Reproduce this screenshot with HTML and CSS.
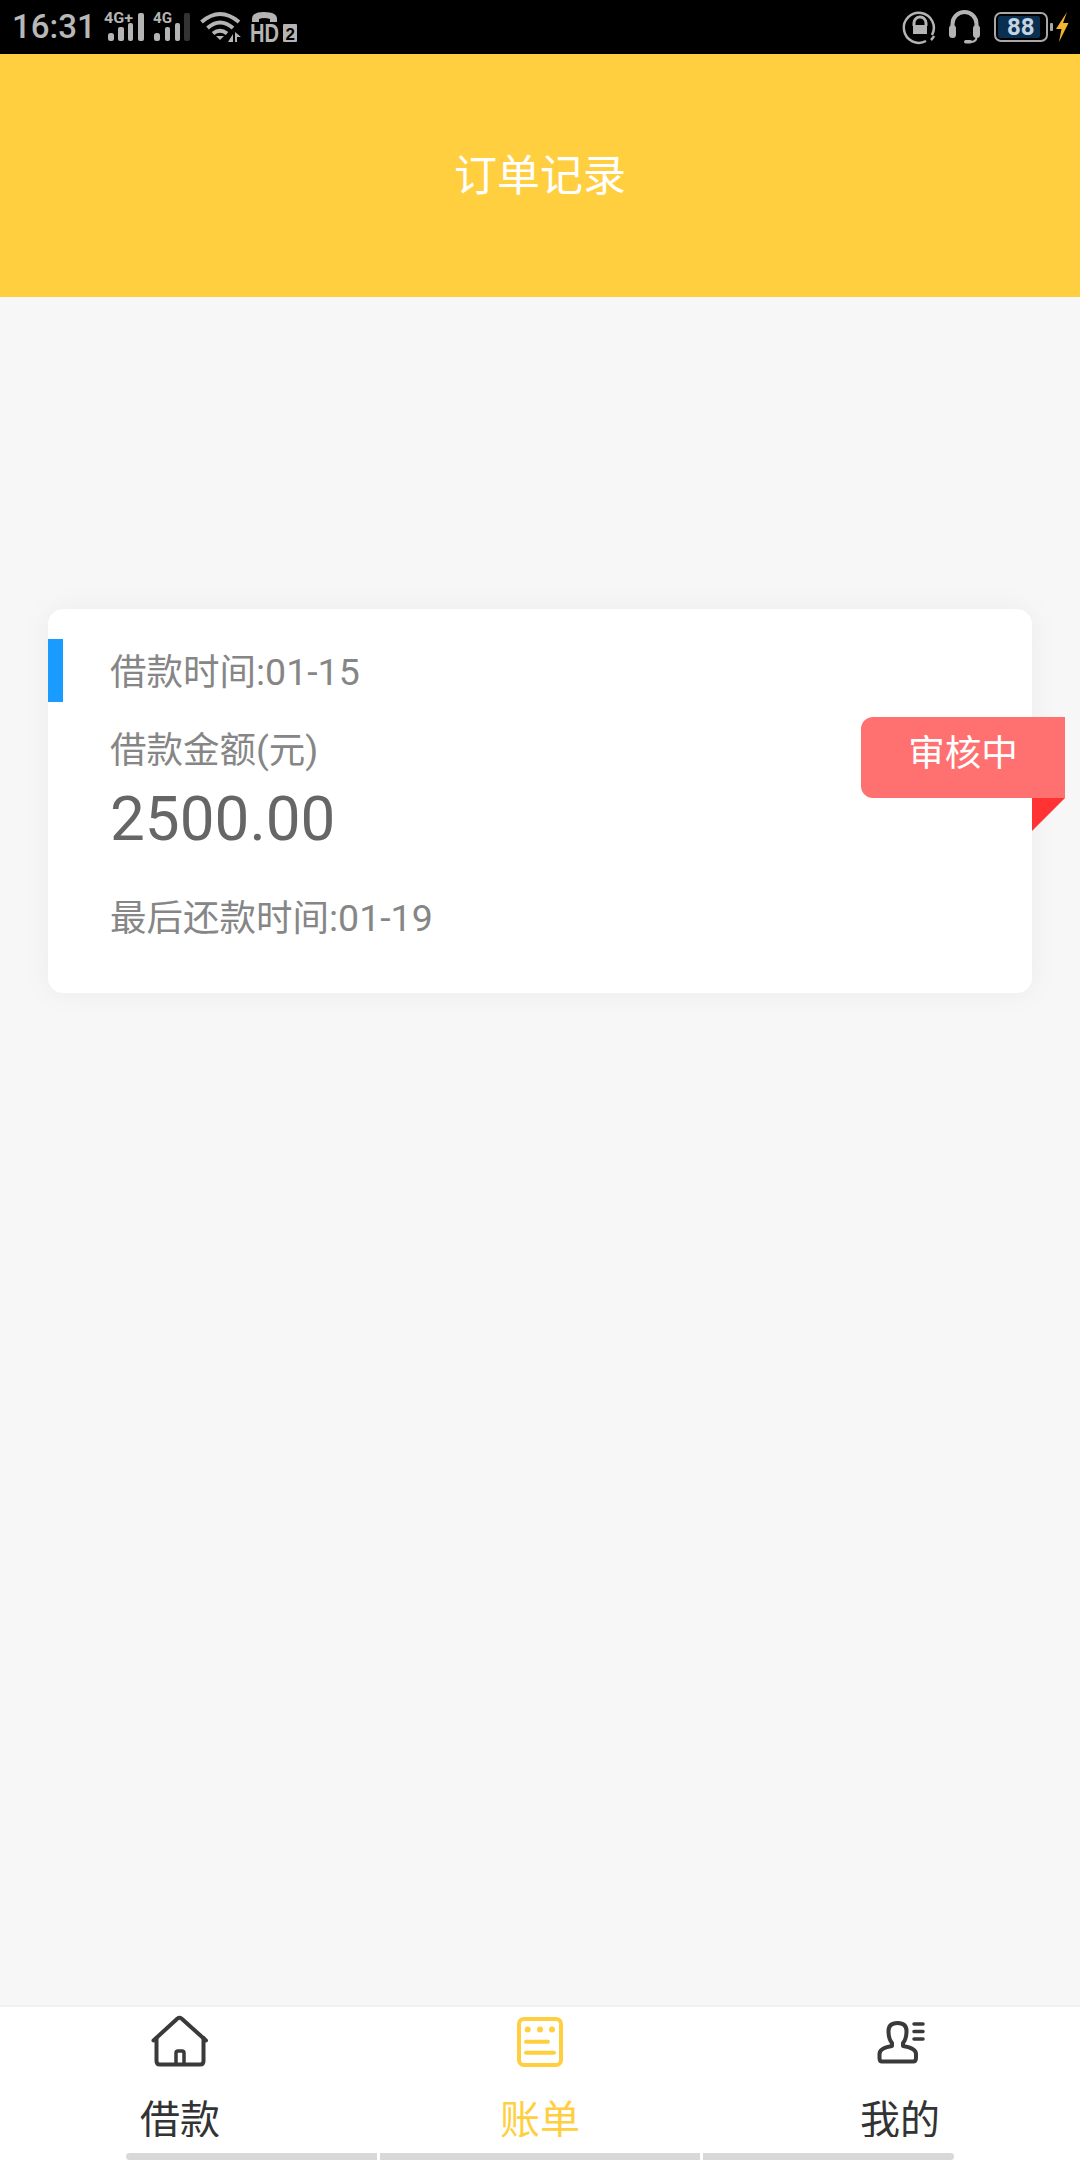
FILE: index.html
```html
<!DOCTYPE html>
<html lang="zh">
<head>
<meta charset="utf-8">
<title>订单记录</title>
<link rel="stylesheet" href="styles.css">
</head>
<body>
<div class="app">
  <div class="statusbar">
    <div class="status-left">
      <span class="time">16:31</span>
      <svg class="status-icons-left" width="200" height="54" viewBox="100 0 200 54">
        <text class="net" x="104" y="23" textLength="29" lengthAdjust="spacingAndGlyphs">4G+</text>
        <g fill="#b4b4b4">
          <rect x="108" y="33" width="6" height="8" rx="2.500"/>
          <rect x="118" y="27" width="6" height="14" rx="2"/>
          <rect x="128" y="23" width="5" height="18" rx="2"/>
          <rect x="138" y="13" width="6" height="28" rx="2"/>
          <rect x="154" y="33" width="6" height="8" rx="2.500"/>
          <rect x="165" y="27" width="5" height="14" rx="2"/>
          <rect x="175" y="23" width="5" height="18" rx="2"/>
        </g>
        <rect x="184" y="13" width="6" height="28" rx="2" fill="#333"/>
        <text class="net" x="153" y="23" textLength="19" lengthAdjust="spacingAndGlyphs">4G</text>
        <g fill="none" stroke="#b4b4b4" stroke-width="4">
          <path d="M201.500 22 Q220 6 239 22"/>
          <path d="M207.500 28 Q220 17 233 28"/>
          <path d="M213 33.500 Q220 28 227 33.500"/>
        </g>
        <path d="M216 36 L220 40 L224 36Z" fill="#b4b4b4"/>
        <path d="M233 34 V42 H228Z M235 32 L241 37 H237 V42 H235Z" fill="#b4b4b4"/>
        <path d="M252 22 V19 Q252 12 264 12 Q277 12 277 19 V22 H270 V19 Q264 17 259 19 V22Z" fill="#b4b4b4"/>
        <text class="hd" x="250" y="42" textLength="29" lengthAdjust="spacingAndGlyphs">HD</text>
        <rect x="283" y="24" width="14" height="18" rx="1" fill="#b4b4b4"/>
        <text class="hd-two" x="285.500" y="39.500">2</text>
      </svg>
    </div>
    <svg class="status-icons-right" width="170" height="54" viewBox="900 0 170 54">
      <g fill="none" stroke="#b4b4b4" stroke-width="2.500">
        <path d="M932 35 A15 15 0 1 0 926 41"/>
        <path d="M931 40 A15 15 0 0 0 934 36"/>
      </g>
      <path d="M914 26 V23 A6 6 0 0 1 926 23 V26" fill="none" stroke="#b4b4b4" stroke-width="3"/>
      <rect x="913" y="25" width="14" height="9" fill="#b4b4b4"/>
      <path d="M952.500 28 V24 A12 12 0 0 1 976.500 24 V28" fill="none" stroke="#b4b4b4" stroke-width="4"/>
      <rect x="949" y="25" width="7" height="13" rx="3.500" fill="#b4b4b4"/>
      <rect x="973" y="25" width="7" height="13" rx="3.500" fill="#b4b4b4"/>
      <path d="M976.500 37 Q976.500 42 970 42" fill="none" stroke="#b4b4b4" stroke-width="2"/>
      <rect x="964" y="40" width="8" height="3.500" rx="1.700" fill="#b4b4b4"/>
      <rect x="995" y="13" width="52" height="28" rx="6" fill="none" stroke="#a8a8a8" stroke-width="2"/>
      <rect x="998" y="16" width="42" height="22" rx="2" fill="#0b2f50"/>
      <text class="batt" x="1007" y="35">88</text>
      <rect x="1050" y="23" width="3" height="8" rx="1" fill="#a8a8a8"/>
      <path d="M1067 12 L1056 29 H1061.500 L1059 42 L1068.500 23 H1063Z" fill="#f4b62f"/>
    </svg>
  </div>

  <header class="titlebar">订单记录</header>

  <main class="content">
    <article class="card">
      <span class="marker"></span>
      <p class="line line-date">借款时间<span class="num">:01-15</span></p>
      <p class="line line-label">借款金额<span class="num">(</span>元<span class="num">)</span></p>
      <p class="amount">2500.00</p>
      <p class="line line-due">最后还款时间<span class="num">:01-19</span></p>
      <div class="badge">审核中</div>
    </article>
  </main>

  <nav class="tabbar">
    <div class="tab">
      <svg class="tab-icon stroke-dark" viewBox="0 0 60 60">
        <path d="M3.500 30.500 L27.500 8.500 Q29.500 7 31.500 8.500 L56 30.500"/>
        <path d="M6.500 28 V51 Q6.500 54.500 10 54.500 H50 Q53.500 54.500 53.500 51 V28"/>
        <path d="M26 54 V43 Q26 41 28 41 H32 Q34 41 34 43 V54" stroke-width="3.500"/>
      </svg>
      <span class="tab-label">借款</span>
    </div>
    <div class="tab tab-active">
      <svg class="tab-icon stroke-yellow" viewBox="0 0 60 60">
        <rect x="9" y="9" width="42" height="46" rx="5"/>
        <circle class="dot" cx="17.700" cy="19.500" r="3"/>
        <circle class="dot" cx="30" cy="19.500" r="3"/>
        <circle class="dot" cx="42" cy="19.500" r="3"/>
        <path d="M16 31.700 H38 M16 42.700 H44"/>
      </svg>
      <span class="tab-label">账单</span>
    </div>
    <div class="tab">
      <svg class="tab-icon stroke-dark" viewBox="0 0 60 60">
        <path d="M22 33 Q18.500 29 18.500 21 Q18.500 13 27.500 13 Q36.500 13 36.500 21 Q36.500 29 33 33 V36 Q46 38 46 44 V48 Q46 51.500 43 51.500 H12 Q9.500 51.500 9.500 48 V44 Q9.500 38 22 36Z"/>
        <path d="M44 14 H53 M44 21.500 H53 M44 29 H53" stroke-width="3.500"/>
      </svg>
      <span class="tab-label">我的</span>
    </div>
  </nav>

  <div class="homebar">
    <span class="homebar-seg homebar-first"></span>
    <span class="homebar-seg homebar-mid"></span>
    <span class="homebar-seg homebar-last"></span>
  </div>
</div>
</body>
</html>
```

FILE: styles.css
```css
* { box-sizing: border-box; }

html, body {
  margin: 0;
  padding: 0;
}

body {
  font-family: Roboto, "Noto Sans CJK SC", sans-serif;
  background: #f7f7f7;
}

.app {
  width: 1080px;
  height: 2160px;
  display: flex;
  flex-direction: column;
  overflow: hidden;
}

.statusbar {
  height: 54px;
  flex: none;
  background: #000;
  display: flex;
  justify-content: space-between;
  padding: 0 10px 0 12px;
}

.status-left {
  display: flex;
  align-items: center;
  gap: 10px;
}

.time {
  color: #b8b8b8;
  font-size: 33px;
  font-weight: 500;
  line-height: 54px;
  width: 78px;
  white-space: nowrap;
}

.net {
  fill: #b4b4b4;
  font: 700 14px Roboto, sans-serif;
}

.hd {
  fill: #b4b4b4;
  font: 700 25px "Liberation Sans", sans-serif;
}

.hd-two {
  fill: #000;
  font: 700 17px "Liberation Sans", sans-serif;
}

.batt {
  fill: #c4d4e2;
  font: 700 24px Roboto, sans-serif;
}

.titlebar {
  height: 243px;
  flex: none;
  background: #ffcf3f;
  color: #fff;
  font-size: 43px;
  padding-bottom: 8px;
  display: flex;
  align-items: center;
  justify-content: center;
}

.content {
  flex: 1;
  padding: 312px 48px 0;
}

.card {
  position: relative;
  height: 384px;
  background: #fff;
  border-radius: 15px;
  box-shadow: 0 0 30px rgba(0, 0, 0, 0.05);
  padding: 31px 0 0 62px;
}

.marker {
  position: absolute;
  left: 0;
  top: 30px;
  width: 15px;
  height: 63px;
  background: #1a9bff;
}

.line {
  margin: 0;
  color: #868686;
  font-size: 36.5px;
  line-height: 64px;
  height: 64px;
}

.num {
  font-size: 37.5px;
}

.line-label {
  margin-top: 14px;
}

.amount {
  margin: 1px 0 0;
  color: #666;
  font-size: 62px;
  line-height: 72px;
}

.line-due {
  margin-top: 31px;
}

.badge {
  position: absolute;
  right: -33px;
  top: 108px;
  width: 204px;
  height: 81px;
  background: #ff7070;
  color: #fff;
  font-size: 36.5px;
  padding-bottom: 14px;
  border-radius: 12px 0 0 12px;
  display: flex;
  align-items: center;
  justify-content: center;
}

.badge::after {
  content: "";
  position: absolute;
  left: 171px;
  top: 81px;
  width: 0;
  height: 0;
  border-style: solid;
  border-width: 33px 33px 0 0;
  border-color: #ff3333 transparent transparent transparent;
}

.tabbar {
  flex: none;
  height: 148px;
  background: #fff;
  border-top: 2px solid #f2f2f2;
  display: grid;
  grid-template-columns: repeat(3, 360px);
  padding-top: 3px;
}

.tab {
  display: flex;
  flex-direction: column;
  align-items: center;
  color: #333;
}

.tab-active {
  color: #ffcf3f;
}

.tab-icon {
  width: 60px;
  height: 60px;
  flex: none;
  fill: none;
  stroke-width: 4;
  stroke-linecap: round;
  stroke-linejoin: round;
}

.stroke-dark { stroke: #3a3a3a; }
.stroke-yellow { stroke: #ffcf3f; }

.dot {
  fill: #ffcf3f;
  stroke: none;
}

.tab-label {
  margin-top: 20px;
  height: 47px;
  font-size: 40px;
  line-height: 62px;
  overflow: hidden;
}

.homebar {
  flex: none;
  height: 7px;
  background: #fff;
  display: flex;
  padding-left: 126px;
  gap: 3px;
}

.homebar-seg {
  display: block;
  height: 7px;
  background: #d8d8d8;
}

.homebar-first { width: 251px; border-radius: 4px 0 0 4px; }
.homebar-mid { width: 320px; }
.homebar-last { width: 251px; border-radius: 0 4px 4px 0; }
```
